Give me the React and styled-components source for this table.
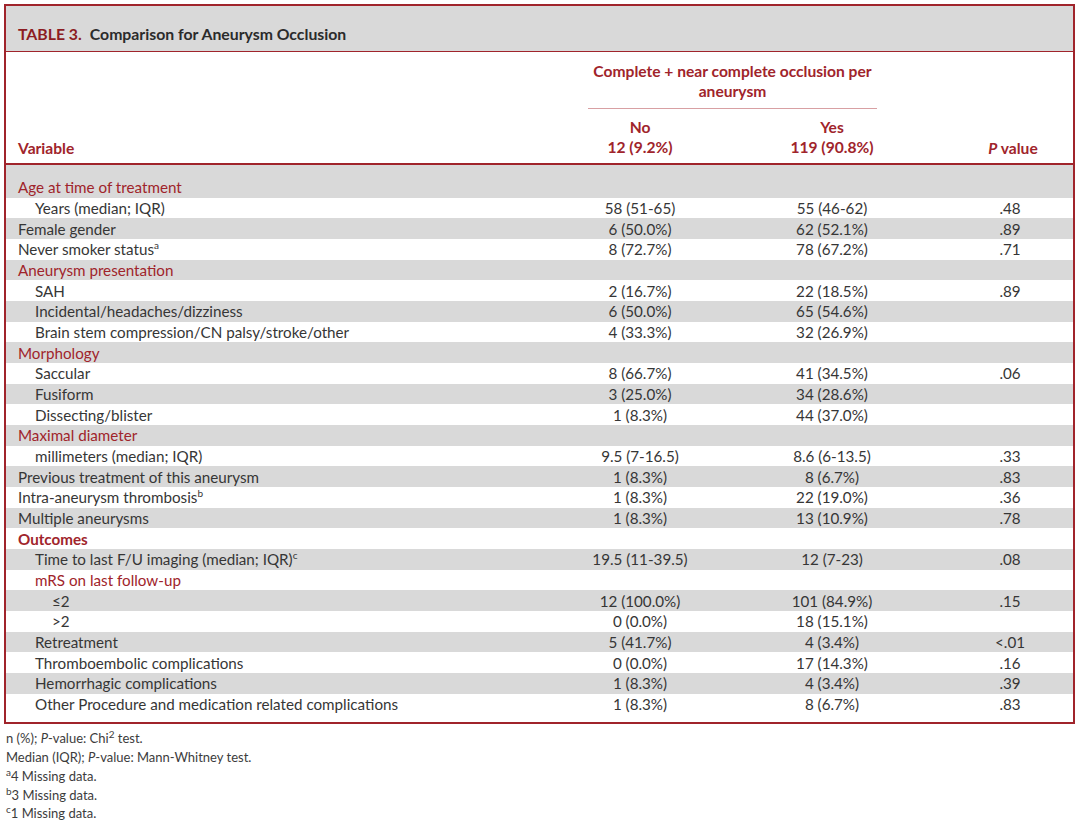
import React from 'react';
import styled, { createGlobalStyle } from 'styled-components';

const RED = '#a0242b';
const TEXT = '#363636';
const GRAY = '#d9d9d9';
const COLS = '538px 192px 192px 144px';

const GlobalStyle = createGlobalStyle`
  body {
    margin: 0;
    background: #fff;
    font-family: Lato, 'Liberation Sans', sans-serif;
    color: ${TEXT};
  }
`;

const Page = styled.div`
  padding: 4px 4px 0 4px;
`;

const TableBox = styled.div`
  width: 1071px;
  box-sizing: border-box;
  border: 2px solid ${RED};
  padding-bottom: 8px;
`;

const TitleBar = styled.div`
  display: flex;
  align-items: center;
  gap: 8px;
  height: 46px;
  padding: 10px 0 0 12px;
  box-sizing: border-box;
  background: ${GRAY};
  border-bottom: 1px solid ${RED};
  font-size: 15.8px;
  font-weight: 700;
  color: #2b2b2b;

  .num {
    color: #8c1c22;
  }
`;

const HeaderGrid = styled.div`
  display: grid;
  grid-template-columns: ${COLS};
  height: 111px;
  border-bottom: 2px solid ${RED};
  font-size: 15.6px;
  font-weight: 700;
  color: ${RED};
  line-height: 20px;
`;

const HeadCell = styled.div`
  align-self: end;
  padding-bottom: 5px;
  padding-left: ${p => p.$pad || 0}px;
  text-align: ${p => p.$align || 'left'};
`;

const SpanGroup = styled.div`
  grid-column: 2 / 4;
  display: flex;
  flex-direction: column;
  padding-top: 9px;
`;

const SpanTitle = styled.div`
  margin: 0 51px 0 44px;
  padding-bottom: 7px;
  text-align: center;
  white-space: nowrap;
  border-bottom: 1px solid #d8a0a3;
`;

const SubHeads = styled.div`
  display: grid;
  grid-template-columns: 192px 192px;
  margin-top: 8px;
  text-align: center;
`;

const Spacer = styled.div`
  height: 12px;
  background: ${GRAY};
`;

const Row = styled.div`
  display: grid;
  grid-template-columns: ${COLS};
  align-items: center;
  height: 20.68px;
  background: ${p => (p.$shade ? GRAY : '#fff')};
  font-size: 15.2px;
  line-height: 20px;
`;

const Label = styled.div`
  padding-left: ${p => 12 + p.$indent * 17}px;
  color: ${p => (p.$kind ? RED : TEXT)};
  font-weight: ${p => (p.$kind === 'bold' ? 700 : 400)};
  white-space: nowrap;

  sup {
    font-size: 10px;
    line-height: 0;
  }
`;

const Value = styled.div`
  text-align: center;
  padding-left: ${p => p.$pad || 0}px;
`;

const Notes = styled.div`
  padding: 5px 0 0 2px;
  font-size: 13px;
  line-height: 18.7px;
  color: #3c3c3c;

  sup {
    font-size: 10px;
    line-height: 0;
  }
`;

const rows = [
  { label: 'Age at time of treatment', kind: 'group', indent: 0 },
  { label: 'Years (median; IQR)', indent: 1, no: '58 (51-65)', yes: '55 (46-62)', p: '.48' },
  { label: 'Female gender', indent: 0, no: '6 (50.0%)', yes: '62 (52.1%)', p: '.89' },
  { label: 'Never smoker status', sup: 'a', indent: 0, no: '8 (72.7%)', yes: '78 (67.2%)', p: '.71' },
  { label: 'Aneurysm presentation', kind: 'group', indent: 0 },
  { label: 'SAH', indent: 1, no: '2 (16.7%)', yes: '22 (18.5%)', p: '.89' },
  { label: 'Incidental/headaches/dizziness', indent: 1, no: '6 (50.0%)', yes: '65 (54.6%)' },
  { label: 'Brain stem compression/CN palsy/stroke/other', indent: 1, no: '4 (33.3%)', yes: '32 (26.9%)' },
  { label: 'Morphology', kind: 'group', indent: 0 },
  { label: 'Saccular', indent: 1, no: '8 (66.7%)', yes: '41 (34.5%)', p: '.06' },
  { label: 'Fusiform', indent: 1, no: '3 (25.0%)', yes: '34 (28.6%)' },
  { label: 'Dissecting/blister', indent: 1, no: '1 (8.3%)', yes: '44 (37.0%)' },
  { label: 'Maximal diameter', kind: 'group', indent: 0 },
  { label: 'millimeters (median; IQR)', indent: 1, no: '9.5 (7-16.5)', yes: '8.6 (6-13.5)', p: '.33' },
  { label: 'Previous treatment of this aneurysm', indent: 0, no: '1 (8.3%)', yes: '8 (6.7%)', p: '.83' },
  { label: 'Intra-aneurysm thrombosis', sup: 'b', indent: 0, no: '1 (8.3%)', yes: '22 (19.0%)', p: '.36' },
  { label: 'Multiple aneurysms', indent: 0, no: '1 (8.3%)', yes: '13 (10.9%)', p: '.78' },
  { label: 'Outcomes', kind: 'bold', indent: 0 },
  { label: 'Time to last F/U imaging (median; IQR)', sup: 'c', indent: 1, no: '19.5 (11-39.5)', yes: '12 (7-23)', p: '.08' },
  { label: 'mRS on last follow-up', kind: 'group', indent: 1 },
  { label: '≤2', indent: 2, no: '12 (100.0%)', yes: '101 (84.9%)', p: '.15' },
  { label: '>2', indent: 2, no: '0 (0.0%)', yes: '18 (15.1%)' },
  { label: 'Retreatment', indent: 1, no: '5 (41.7%)', yes: '4 (3.4%)', p: '<.01' },
  { label: 'Thromboembolic complications', indent: 1, no: '0 (0.0%)', yes: '17 (14.3%)', p: '.16' },
  { label: 'Hemorrhagic complications', indent: 1, no: '1 (8.3%)', yes: '4 (3.4%)', p: '.39' },
  { label: 'Other Procedure and medication related complications', indent: 1, no: '1 (8.3%)', yes: '8 (6.7%)', p: '.83' },
];

const App = () => (
  <Page>
    <GlobalStyle />
    <TableBox>
      <TitleBar>
        <span className='num'>TABLE 3.</span>
        <span>Comparison for Aneurysm Occlusion</span>
      </TitleBar>
      <HeaderGrid>
        <HeadCell $pad={12}>Variable</HeadCell>
        <SpanGroup>
          <SpanTitle>
            Complete + near complete occlusion per
            <br />
            aneurysm
          </SpanTitle>
          <SubHeads>
            <div>
              No
              <br />
              12 (9.2%)
            </div>
            <div>
              Yes
              <br />
              119 (90.8%)
            </div>
          </SubHeads>
        </SpanGroup>
        <HeadCell $align='center' $pad={26}>
          <i>P</i> value
        </HeadCell>
      </HeaderGrid>
      <Spacer />
      {rows.map((r, i) => (
        <Row key={i} $shade={i % 2 === 0}>
          <Label $indent={r.indent} $kind={r.kind}>
            {r.label}
            {r.sup && <sup>{r.sup}</sup>}
          </Label>
          <Value>{r.no}</Value>
          <Value>{r.yes}</Value>
          <Value $pad={20}>{r.p}</Value>
        </Row>
      ))}
    </TableBox>
    <Notes>
      <div>
        n (%); <i>P</i>-value: Chi<sup>2</sup> test.
      </div>
      <div>
        Median (IQR); <i>P</i>-value: Mann-Whitney test.
      </div>
      <div>
        <sup>a</sup>4 Missing data.
      </div>
      <div>
        <sup>b</sup>3 Missing data.
      </div>
      <div>
        <sup>c</sup>1 Missing data.
      </div>
    </Notes>
  </Page>
);

export default App;
